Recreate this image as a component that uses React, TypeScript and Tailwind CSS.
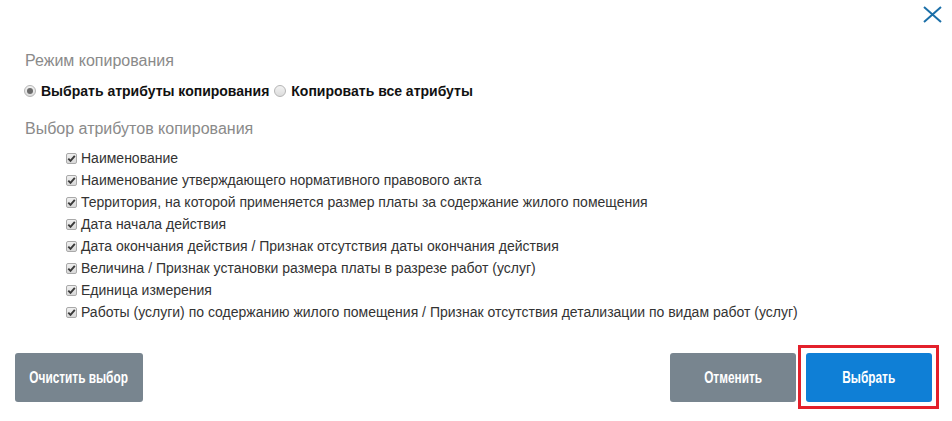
import React from "react";

const items = [
  "Наименование",
  "Наименование утверждающего нормативного правового акта",
  "Территория, на которой применяется размер платы за содержание жилого помещения",
  "Дата начала действия",
  "Дата окончания действия / Признак отсутствия даты окончания действия",
  "Величина / Признак установки размера платы в разрезе работ (услуг)",
  "Единица измерения",
  "Работы (услуги) по содержанию жилого помещения / Признак отсутствия детализации по видам работ (услуг)",
];

function CheckBox() {
  return (
    <span className="flex h-[11px] w-[11px] shrink-0 items-center justify-center rounded-[2px] border border-[#a9a9a9] bg-gradient-to-b from-[#f0f0f0] to-[#d8d8d8]">
      <svg width="9" height="9" viewBox="0 0 9 9">
        <path d="M1.3 4.6 L3.5 6.8 L7.8 1.8" fill="none" stroke="#3a3a3a" strokeWidth="1.9" />
      </svg>
    </span>
  );
}

function Radio({ checked }: { checked?: boolean }) {
  return (
    <span className="flex h-[12px] w-[12px] shrink-0 items-center justify-center rounded-full border border-[#b5b5b5] bg-gradient-to-b from-[#f2f2f2] to-[#dcdcdc]">
      {checked && <span className="h-[6px] w-[6px] rounded-full bg-[#6a6a6a]" />}
    </span>
  );
}

export default function App() {
  return (
    <div className="relative flex h-[421px] w-[952px] flex-col bg-white font-['Liberation_Sans',Arial,sans-serif]">
      <div className="flex h-[40px] justify-end pr-[10px] pt-[6px]">
        <svg width="19" height="17" viewBox="0 0 19 17">
          <path d="M1 1 L18 16 M18 1 L1 16" stroke="#1b6fa8" strokeWidth="2" fill="none" />
        </svg>
      </div>

      <div className="mt-[11px] pl-[25px] text-[16px] leading-[20px] text-[#8a8a8a]">
        Режим копирования
      </div>

      <div className="mt-[10px] flex h-[20px] items-center pl-[24px] text-[14px] font-bold text-[#111]">
        <Radio checked />
        <span className="ml-[5px]">Выбрать атрибуты копирования</span>
        <span className="ml-[5px]"><Radio /></span>
        <span className="ml-[5px]">Копировать все атрибуты</span>
      </div>

      <div className="mt-[18px] pl-[25px] text-[16px] leading-[20px] text-[#8a8a8a]">
        Выбор атрибутов копирования
      </div>

      <div className="mt-[8px] flex flex-col pl-[66px]">
        {items.map((t) => (
          <div key={t} className="flex h-[22px] items-center gap-[4px] text-[14px] text-[#333]">
            <CheckBox />
            <span>{t}</span>
          </div>
        ))}
      </div>

      <div className="mt-[30px] flex items-start pl-[15px] pr-[13px] text-[16px] font-bold text-white">
        <button className="flex h-[49px] w-[128px] items-center justify-center rounded-[3px] bg-[#78858f]">
          <span className="inline-block scale-x-[0.74] whitespace-nowrap">Очистить выбор</span>
        </button>
        <div className="flex-1" />
        <button className="flex h-[49px] w-[126px] items-center justify-center rounded-[3px] bg-[#78858f]">
          <span className="inline-block scale-x-[0.74] whitespace-nowrap">Отменить</span>
        </button>
        <div className="-mb-[7px] -mt-[8px] ml-[2px] border-[3px] border-[#e3202b] pb-[4px] pl-[5px] pr-[4px] pt-[5px]">
          <button className="flex h-[49px] w-[126px] items-center justify-center rounded-[3px] bg-[#0f7fd6]">
            <span className="inline-block scale-x-[0.74] whitespace-nowrap">Выбрать</span>
          </button>
        </div>
      </div>
    </div>
  );
}
